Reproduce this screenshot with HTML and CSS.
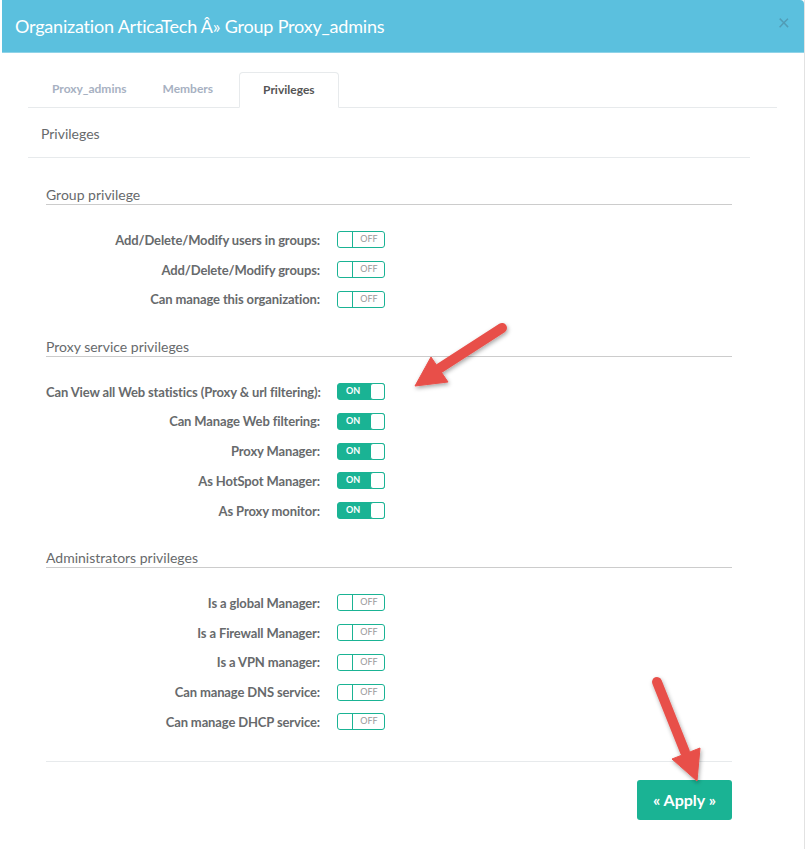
FILE: index.html
```html
<!DOCTYPE html>
<html lang="en">
<head>
    <meta charset="UTF-8">
    <meta name="viewport" content="width=device-width, initial-scale=1.0">
    <title>Group Proxy_admins</title>
    <link rel="stylesheet" href="styles.css">
</head>
<body>
    <div class="modal">
        <div class="modal-header">
            <h3>Organization ArticaTech Â» Group Proxy_admins</h3>
            <span class="close">&times;</span>
        </div>

        <div class="modal-body">
            <ul class="tabs">
                <li>Proxy_admins</li>
                <li>Members</li>
                <li class="active">Privileges</li>
            </ul>

            <div class="panel-title">Privileges</div>

            <div class="form">
                <div class="legend">Group privilege</div>
                <div class="rows">
                    <div class="row"><label>Add/Delete/Modify users in groups:</label><span class="switch">OFF</span></div>
                    <div class="row"><label>Add/Delete/Modify groups:</label><span class="switch">OFF</span></div>
                    <div class="row"><label>Can manage this organization:</label><span class="switch">OFF</span></div>
                </div>

                <div class="legend">Proxy service privileges</div>
                <div class="rows">
                    <div class="row"><label>Can View all Web statistics (Proxy &amp; url filtering):</label><span class="switch on">ON</span></div>
                    <div class="row"><label>Can Manage Web filtering:</label><span class="switch on">ON</span></div>
                    <div class="row"><label>Proxy Manager:</label><span class="switch on">ON</span></div>
                    <div class="row"><label>As HotSpot Manager:</label><span class="switch on">ON</span></div>
                    <div class="row"><label>As Proxy monitor:</label><span class="switch on">ON</span></div>
                </div>

                <div class="legend">Administrators privileges</div>
                <div class="rows">
                    <div class="row"><label>Is a global Manager:</label><span class="switch">OFF</span></div>
                    <div class="row"><label>Is a Firewall Manager:</label><span class="switch">OFF</span></div>
                    <div class="row"><label>Is a VPN manager:</label><span class="switch">OFF</span></div>
                    <div class="row"><label>Can manage DNS service:</label><span class="switch">OFF</span></div>
                    <div class="row"><label>Can manage DHCP service:</label><span class="switch">OFF</span></div>
                </div>

                <div class="form-footer">
                    <button>&laquo; Apply &raquo;</button>
                </div>
            </div>
        </div>
    </div>

    <!-- annotation arrows drawn over the screenshot -->
    <svg class="arrows" width="807" height="849" viewBox="0 0 807 849">
        <defs>
            <filter id="shadow" x="-20%" y="-20%" width="140%" height="140%">
                <feDropShadow dx="1" dy="2" stdDeviation="2" flood-color="#000" flood-opacity="0.35"/>
            </filter>
        </defs>
        <g fill="#e8504a" stroke="#e8504a" filter="url(#shadow)">
            <line x1="502" y1="328" x2="440" y2="368" stroke-width="10" stroke-linecap="round"/>
            <polygon points="415,386 431,357 448,382" stroke-width="1" stroke-linejoin="round"/>
            <line x1="657" y1="682" x2="685" y2="752" stroke-width="10" stroke-linecap="round"/>
            <polygon points="697,781 672,759 700,748" stroke-width="1" stroke-linejoin="round"/>
        </g>
    </svg>
</body>
</html>
```

FILE: styles.css
```css
body {
    margin: 0;
    background: #fff;
    font-family: Lato, "Open Sans", Arial, sans-serif;
    color: #676a6c;
}
.modal {
    margin: 0 2px;
    min-height: 849px;
    background: #fff;
    border-right: 1px solid #e2e2e2;
}
.modal-header {
    position: relative;
    height: 52px;
    background: #5bc0de;
    border-top-right-radius: 4px;
    border-bottom: 1px solid #8fd3e8;
    display: flex;
    align-items: center;
    padding: 0 13px;
}
.modal-header h3 {
    margin: 0;
    font-size: 18px;
    font-weight: normal;
    letter-spacing: -0.2px;
    color: #fff;
}
.close {
    position: absolute;
    right: 14px;
    top: 9px;
    font-size: 21px;
    color: #4e8da4;
    opacity: 0.7;
}
.modal-body {
    padding: 19px 27px 0 26px;
}
.tabs {
    list-style: none;
    margin: 0;
    padding: 0 0 0 14px;
    display: flex;
    border-bottom: 1px solid #e7eaec;
}
.tabs li {
    height: 34px;
    line-height: 34px;
    padding: 0 10px;
    margin-right: 16px;
    font-size: 12px;
    font-weight: bold;
    color: #a7b1c2;
}
.tabs li.active {
    margin: 0 0 -1px;
    padding: 0 23px;
    color: #555;
    background: #fff;
    border: 1px solid #e7eaec;
    border-bottom-color: #fff;
    border-radius: 4px 4px 0 0;
}
.panel-title {
    margin-right: 27px;
    padding: 16px 13px 13px;
    line-height: 20px;
    font-size: 14px;
    border-bottom: 1px solid #e7eaec;
}
.form {
    padding: 0 18px;
    margin-right: 27px;
}
.legend {
    margin-top: 23.5px;
    line-height: 18px;
    font-size: 14px;
    border-bottom: 1px solid #ccc;
}
.form > .legend:first-child {
    margin-top: 28px;
}
.rows {
    margin-top: 20px;
}
.row {
    display: grid;
    grid-template-columns: 274px auto;
    column-gap: 17px;
    align-items: center;
    height: 29.75px;
}
.row label {
    text-align: right;
    font-size: 13px;
    font-weight: bold;
    letter-spacing: -0.13px;
    color: #676a6c;
    white-space: nowrap;
}
.switch {
    position: relative;
    box-sizing: border-box;
    width: 48px;
    height: 17px;
    border: 1.5px solid #1ab394;
    border-radius: 3px;
    padding-left: 16px;
    font-size: 9px;
    line-height: 14px;
    text-align: center;
    color: #999;
}
.switch::before {
    content: "";
    position: absolute;
    left: 0;
    top: 0;
    bottom: 0;
    width: 14px;
    border-right: 1.5px solid #1ab394;
}
.switch.on {
    background: #1ab394;
    color: #fff;
    font-weight: bold;
    padding: 0 16px 0 0;
}
.switch.on::before {
    left: auto;
    right: -1px;
    top: -1px;
    bottom: -1px;
    width: 13px;
    background: #fff;
    border: 1.5px solid #1ab394;
    border-radius: 3px;
}
.form-footer {
    margin-top: 24px;
    padding-top: 18px;
    border-top: 1px solid #e7eaec;
    display: flex;
    justify-content: flex-end;
}
.form-footer button {
    width: 95px;
    height: 40px;
    border: none;
    border-radius: 3px;
    background: #1ab394;
    color: #fff;
    font-family: inherit;
    font-size: 16px;
    font-weight: bold;
}
.arrows {
    position: absolute;
    left: 0;
    top: 0;
    pointer-events: none;
}
```
